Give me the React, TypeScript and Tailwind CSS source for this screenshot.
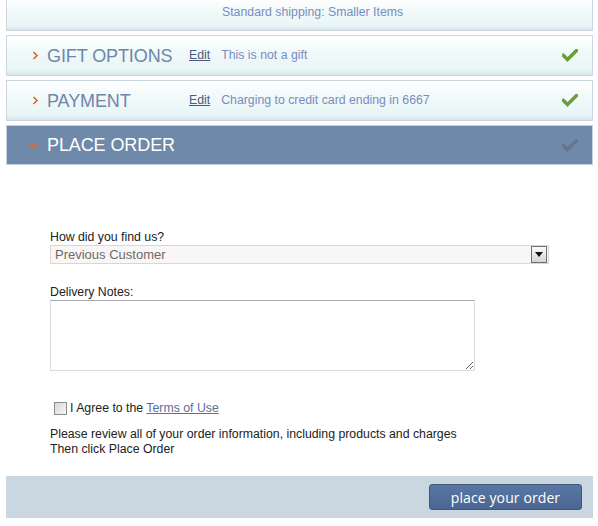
import React from "react";

const panelBg =
  "bg-[linear-gradient(to_bottom,#ffffff_0%,#f2fafa_35%,#e9f5f6_85%,#dae6eb_100%)]";

function Check({ color }: { color: string }) {
  return (
    <svg width="16" height="13" viewBox="0 0 16 13" className="shrink-0">
      <path d="M1.5 6.5 L5.5 10.5 L14.5 1.5" fill="none" stroke={color} strokeWidth="3.4" strokeLinecap="square" />
    </svg>
  );
}

function Arrow({ down }: { down?: boolean }) {
  return down ? (
    <svg width="10" height="9" viewBox="0 0 10 9" className="shrink-0">
      <path d="M1 2.5 L5 6.5 L9 2.5" fill="none" stroke="#e0652a" strokeWidth="1.8" />
    </svg>
  ) : (
    <svg width="7" height="9" viewBox="0 0 7 9" className="shrink-0">
      <path d="M1.5 1 L5 4.5 L1.5 8" fill="none" stroke="#d9601f" strokeWidth="1.5" />
    </svg>
  );
}

function Step({ title, summary }: { title: string; summary: string }) {
  return (
    <div className={`flex h-[41px] items-center border border-[#cbd8e1] pl-[25px] pr-[14px] ${panelBg}`}>
      <Arrow />
      <span className="ml-[8px] w-[142px] text-[18px] leading-none tracking-[-0.1px] text-[#6e86aa]">{title}</span>
      <a href="#" className="text-[12.3px] text-[#4b5b80] underline">
        Edit
      </a>
      <span className="ml-[11px] text-[12.3px] text-[#7a8cc0]">{summary}</span>
      <span className="ml-auto">
        <Check color="#6b9e3a" />
      </span>
    </div>
  );
}

export default function App() {
  return (
    <div className="w-[598px] h-[526px] bg-white pl-[6px] pr-[5px] font-['Liberation_Sans',Arial,sans-serif]">
      {/* shipping summary (cut off at top) */}
      <div className={`flex h-[31px] items-center border-x border-b border-[#cbd8e1] pl-[215px] pb-[6px] ${panelBg}`}>
        <span className="text-[12.3px] text-[#7a8cc0]">Standard shipping: Smaller Items</span>
      </div>

      <div className="mt-[4px] flex flex-col gap-[4px]">
        <Step title="GIFT OPTIONS" summary="This is not a gift" />
        <Step title="PAYMENT" summary="Charging to credit card ending in 6667" />
        <div className="flex h-[40px] items-center border border-[#c4d1dc] bg-[#6f89aa] pl-[22px] pr-[14px]">
          <Arrow down />
          <span className="ml-[8px] text-[18px] leading-none tracking-[-0.1px] text-white">PLACE ORDER</span>
          <span className="ml-auto">
            <Check color="#6a7486" />
          </span>
        </div>
      </div>

      {/* form */}
      <div className="pl-[44px] pt-[65px] text-[12.3px] text-[#222]">
        <label className="block leading-[14px]">How did you find us?</label>
        <div className="mt-[1px] flex h-[19px] w-[499px] items-center border border-[#ddd6cf] bg-[#f9f7f5] pl-[4px] pr-[1px]">
          <span className="text-[13px] text-[#6a6a6a]">Previous Customer</span>
          <span className="ml-auto flex h-[17px] w-[16px] items-center justify-center border border-[#6f6f6f] bg-[linear-gradient(to_bottom,#fafafa,#d4d4d4)]">
            <svg width="8" height="5" viewBox="0 0 8 5">
              <path d="M0 0 H8 L4 5 Z" fill="#111" />
            </svg>
          </span>
        </div>

        <label className="mt-[21px] block leading-[14px]">Delivery Notes:</label>
        <textarea className="mt-[1px] block h-[71px] w-[425px] rounded-[1px] border border-[#d7dbe3] border-t-[#a7a9b2] bg-white outline-none" />

        <div className="mt-[30px] flex items-center pl-[4px]">
          <span className="h-[13px] w-[13px] border border-[#8c8c8c] bg-[linear-gradient(135deg,#d8d8d8,#f6f6f6)]" />
          <span className="ml-[3px] leading-[14px]">
            I Agree to the{" "}
            <a href="#" className="text-[#5b6f9c] underline">
              Terms of Use
            </a>
          </span>
        </div>

        <p className="mt-[12px] leading-[15px]">
          Please review all of your order information, including products and charges
          <br />
          Then click Place Order
        </p>
      </div>

      {/* action bar */}
      <div className="mt-[19px] flex h-[42px] items-center justify-end bg-[#cad7e1] pr-[11px]">
        <button className="h-[26px] w-[153px] rounded-[3px] border border-[#3e5780] bg-[linear-gradient(to_bottom,#5a76a3,#4b6693)] font-['Open_Sans',sans-serif] text-[14px] tracking-[0.1px] text-white">
          place your order
        </button>
      </div>
    </div>
  );
}
